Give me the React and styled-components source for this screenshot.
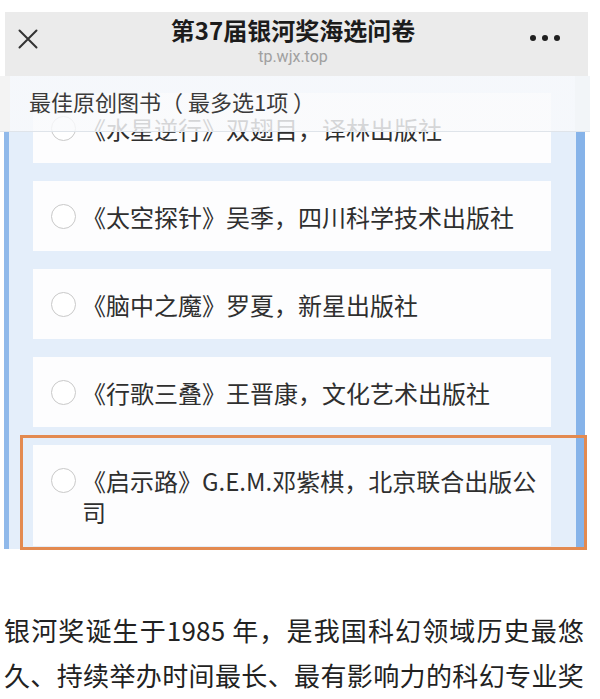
import React from "react";
import styled, { createGlobalStyle } from "styled-components";

const GlobalStyle = createGlobalStyle`
  html, body {
    margin: 0;
    padding: 0;
    background: #ffffff;
    overflow: hidden;
  }
  body {
    font-family: "Noto Sans CJK SC", "Noto Sans", sans-serif;
    color: #333;
  }
`;

const Screen = styled.div`
  width: 600px;
  padding-top: 12px;
`;

const TopBar = styled.header`
  display: grid;
  grid-template-columns: 64px 1fr 56px;
  height: 64px;
  margin: 0 12px 0 5px;
  padding: 0 28px 0 13px;
  background: #ebebeb;
`;

const CloseButton = styled.div`
  align-self: start;
  margin-top: 17px;
  width: 20px;
  height: 20px;
  color: #333;
`;

const TitleBlock = styled.div`
  display: flex;
  flex-direction: column;
  align-items: center;
  padding-top: 3px;
`;

const Title = styled.h1`
  margin: 0;
  font-size: 24px;
  line-height: 30px;
  font-weight: 700;
  color: #1c1c1c;
  white-space: nowrap;
`;

const Url = styled.div`
  margin-top: 3px;
  font-family: Roboto, "Liberation Sans", sans-serif;
  font-size: 16px;
  line-height: 18px;
  color: #a0a0a0;
`;

const MoreButton = styled.div`
  align-self: start;
  justify-self: end;
  display: flex;
  gap: 6px;
  margin-top: 23px;
`;

const Dot = styled.span`
  width: 6px;
  height: 6px;
  border-radius: 50%;
  background: #1f1f1f;
`;

const Survey = styled.section`
  position: relative;
  width: 590px;
`;

const QuestionHeader = styled.div`
  position: absolute;
  top: 0;
  left: 0;
  right: 0;
  z-index: 2;
  height: 56px;
  box-sizing: border-box;
  padding: 14px 0 0 29px;
  font-size: 22px;
  line-height: 22px;
  color: #3a3a3a;
  background: linear-gradient(
    to right,
    #f3f3f3 0 10px,
    rgba(249, 250, 252, 0.82) 10px 575px,
    #f2f5f8 575px
  );
  border-bottom: 1px solid #dfe4ea;
`;

const OptionList = styled.div`
  display: flex;
  flex-direction: column;
  gap: 18px;
  width: 581px;
  box-sizing: border-box;
  margin-left: 4px;
  padding: 17px 25px 3px 24px;
  background: #e4eefa;
  border-left: 5px solid #90b9ea;
  border-right: 9px solid #86b3e9;
`;

const Option = styled.div`
  position: relative;
  display: flex;
  align-items: flex-start;
  padding: 19.5px 8px 19.5px 18px;
  background: #fdfdfe;
`;

const Radio = styled.span`
  flex: none;
  width: 25px;
  height: 25px;
  box-sizing: border-box;
  margin: 3px 6px 0 0;
  border-radius: 50%;
  border: 1.5px solid #c9c9c9;
  background: #fff;
`;

const Label = styled.span`
  font-size: 24px;
  line-height: 31px;
  color: #2f2f2f;
`;

const Highlight = styled.span`
  position: absolute;
  top: -10px;
  bottom: -4px;
  left: -13px;
  right: -36px;
  border: 3.5px solid #e38a50;
  pointer-events: none;
`;

const Article = styled.article`
  padding: 58px 0 0 4px;
`;

const Line = styled.p`
  width: 580px;
  margin: 0;
  font-size: 26px;
  line-height: 45px;
  letter-spacing: 0.2px;
  color: #222;
  text-align: justify;
  text-align-last: justify;
`;

const options = [
  { text: "《水星逆行》双翅目，译林出版社" },
  { text: "《太空探针》吴季，四川科学技术出版社" },
  { text: "《脑中之魔》罗夏，新星出版社" },
  { text: "《行歌三叠》王晋康，文化艺术出版社" },
  { text: "《启示路》G.E.M.邓紫棋，北京联合出版公司", marked: true },
];

const CloseIcon = () => (
  <svg width="20" height="20" viewBox="0 0 20 20" fill="none">
    <path d="M1.5 1.5 L18.5 18.5 M18.5 1.5 L1.5 18.5" stroke="currentColor" strokeWidth="2" strokeLinecap="round" />
  </svg>
);

export default function App() {
  return (
    <Screen>
      <GlobalStyle />
      <TopBar>
        <CloseButton>
          <CloseIcon />
        </CloseButton>
        <TitleBlock>
          <Title>第37届银河奖海选问卷</Title>
          <Url>tp.wjx.top</Url>
        </TitleBlock>
        <MoreButton>
          <Dot />
          <Dot />
          <Dot />
        </MoreButton>
      </TopBar>

      <Survey>
        <QuestionHeader>最佳原创图书（ 最多选1项 ）</QuestionHeader>
        <OptionList>
          {options.map((item, i) => (
            <Option key={i}>
              <Radio />
              <Label>{item.text}</Label>
              {item.marked && <Highlight />}
            </Option>
          ))}
        </OptionList>
      </Survey>

      <Article>
        <Line>银河奖诞生于1985 年，是我国科幻领域历史最悠</Line>
        <Line>久、持续举办时间最长、最有影响力的科幻专业奖</Line>
      </Article>
    </Screen>
  );
}
